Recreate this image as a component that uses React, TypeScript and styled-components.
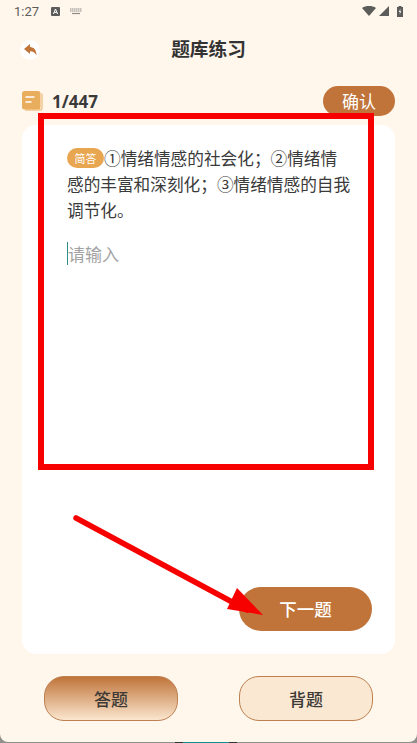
import React from "react";
import styled, { createGlobalStyle } from "styled-components";

const Global = createGlobalStyle`
  html, body { margin: 0; padding: 0; background: #8f8f8c; }
  * { box-sizing: border-box; }
`;

const font = `"Noto Sans CJK SC", "Noto Sans", sans-serif`;

const Screen = styled.div`
  position: relative;
  width: 417px;
  height: 743px;
  overflow: hidden;
  background: #8f8f8c;
  font-family: ${font};
`;

const Page = styled.div`
  width: 417px;
  height: 742px;
  background: #fff6ec;
  border-radius: 0 0 8px 8px;
  display: flex;
  flex-direction: column;
`;

const StatusBar = styled.div`
  height: 24px;
  padding: 0 14px 2px 14px;
  display: flex;
  align-items: center;
  gap: 10px;
  color: #5c5c5a;
`;

const Clock = styled.span`
  font-family: Roboto, sans-serif;
  font-size: 13px;
  width: 27px;
`;

const StatusRight = styled.div`
  margin-left: auto;
  display: flex;
  align-items: center;
  gap: 3px;
`;

const Header = styled.div`
  height: 54px;
  padding: 0 20px;
  display: flex;
  align-items: center;
  position: relative;
  justify-content: center;
`;

const BackButton = styled.div`
  position: absolute;
  left: 20px;
  top: 16px;
  width: 20px;
  height: 20px;
  border-radius: 50%;
  background: #fff;
  display: flex;
  align-items: center;
  justify-content: center;
`;

const Title = styled.h1`
  margin: 0 0 6px;
  font-size: 18.7px;
  line-height: 24px;
  font-weight: 700;
  color: #333;
`;

const ProgressRow = styled.div`
  height: 47px;
  padding: 8px 22px 0 22px;
  display: flex;
  align-items: flex-start;
`;

const SvgIcon = styled.svg`
  display: block;
  flex: none;
`;

const BookIcon = styled(SvgIcon)`
  margin-top: 5px;
`;

const BatteryIcon = styled(SvgIcon)`
  margin-left: 5px;
`;

const Count = styled.span`
  margin-left: 9px;
  margin-top: 6px;
  font-family: "Noto Sans", sans-serif;
  font-size: 17px;
  line-height: 20px;
  font-weight: 700;
  color: #3a3a3a;
`;

const Confirm = styled.div`
  margin-left: auto;
  width: 72px;
  height: 30px;
  border-radius: 15px;
  background: #c07439;
  color: #fff;
  font-size: 17px;
  line-height: 30px;
  text-align: center;
`;

const Card = styled.div`
  margin: 0 22px;
  height: 529px;
  background: #fff;
  border-radius: 14px;
  padding: 20px 23px 0 45px;
  display: flex;
  flex-direction: column;
  position: relative;
`;

const Question = styled.p`
  margin: 0;
  font-size: 16.67px;
  line-height: 26px;
  color: #3a3a3a;
  width: 285px;
  word-break: break-all;
`;

const Tag = styled.span`
  display: inline-block;
  width: 37px;
  height: 20px;
  border-radius: 10px;
  background: #e9a650;
  color: #fff;
  font-size: 11px;
  line-height: 20px;
  text-align: center;
  vertical-align: 2px;
`;

const Input = styled.div`
  margin-top: 19px;
  height: 23px;
  border-left: 1px solid #2e8f8a;
  font-size: 17px;
  line-height: 23px;
  color: #a3a3a3;
`;

const NextButton = styled.div`
  position: absolute;
  right: 23px;
  bottom: 23px;
  width: 133px;
  height: 44px;
  border-radius: 22px;
  background: #c07439;
  color: #fff;
  font-size: 17.500px;
  font-weight: 500;
  line-height: 44px;
  text-align: center;
`;

const Tabs = styled.div`
  margin-top: 22px;
  padding: 0 44px;
  display: flex;
  justify-content: space-between;
`;

const Tab = styled.div<{ $active?: boolean }>`
  width: 134px;
  height: 45px;
  border-radius: 20px;
  border: 1px solid #bd804f;
  background: ${(p) =>
    p.$active ? "linear-gradient(180deg, #c07439 0%, #fbe6cf 100%)" : "#fbe8d2"};
  color: #3d3a36;
  font-size: 17px;
  font-weight: 500;
  line-height: 43px;
  text-align: center;
`;

const Frame = styled.div`
  position: absolute;
  left: 38px;
  top: 113px;
  width: 336px;
  height: 357px;
  border: 6px solid #f60000;
`;

const Overlay = styled.svg`
  position: absolute;
  left: 0;
  top: 0;
  pointer-events: none;
`;

const HomeBar = styled.div`
  position: absolute;
  left: 175px;
  bottom: 0;
  width: 62px;
  height: 1px;
  background: linear-gradient(90deg, #333 0 13%, #0f8f8f 13% 87%, #333 87% 100%);
`;

export default function App() {
  return (
    <Screen>
      <Global />
      <Page>
        <StatusBar>
          <Clock>1:27</Clock>
          <SvgIcon width="9" height="9" viewBox="0 0 9 9">
            <rect width="9" height="9" rx="1" fill="#5c5c5a" />
            <path d="M2.400 7 4.500 2l2.100 5M3.200 5.400h2.600" stroke="#fff" strokeWidth="1" fill="none" />
          </SvgIcon>
          <SvgIcon width="12" height="7" viewBox="0 0 12 7">
            <path d="M0 1h12M0 3h12" stroke="#8b8b89" strokeWidth="1.200" strokeDasharray="1.500 .5" />
            <path d="M2 5.500h8" stroke="#8b8b89" strokeWidth="1.200" />
          </SvgIcon>
          <StatusRight>
            <SvgIcon width="14" height="10" viewBox="0 0 14 10">
              <path d="M0 2C4 -.6 10 -.6 14 2L7 10z" fill="#5c5c5a" />
            </SvgIcon>
            <SvgIcon width="10" height="10" viewBox="0 0 10 10">
              <path d="M10 0v10H0z" fill="#5c5c5a" />
            </SvgIcon>
            <BatteryIcon width="6" height="11" viewBox="0 0 6 11">
              <path d="M1.500 0h3v1H6v10H0V1h1.500z" fill="#5c5c5a" />
              <path d="M3.500 2.500 1.800 6h1.100L2.600 8.500 4.300 5.200H3.200z" fill="#fff" />
            </BatteryIcon>
          </StatusRight>
        </StatusBar>
        <Header>
          <BackButton>
            <SvgIcon width="13" height="12" viewBox="0 0 13 12">
              <path d="M0 5 6 0v3c4 .2 6.500 3 6.500 8.500C11 8.500 9 7.300 6 7.300V10z" fill="#c07439" />
            </SvgIcon>
          </BackButton>
          <Title>题库练习</Title>
        </Header>
        <ProgressRow>
          <BookIcon width="21" height="20" viewBox="0 0 21 20">
            <path d="M19.500 2.500h1v15a2 2 0 0 1-2 2H3v-1h15.500a1 1 0 0 0 1-1z" fill="#e9ad5e" />
            <rect x="0" y="0" width="18.500" height="18.500" rx="2.500" fill="#e9ad5e" />
            <path d="M3.500 6h9M3.500 11h6" stroke="#fff" strokeWidth="1.400" />
          </BookIcon>
          <Count>1/447</Count>
          <Confirm>确认</Confirm>
        </ProgressRow>
        <Card>
          <Question>
            <Tag>简答</Tag>①情绪情感的社会化；②情绪情感的丰富和深刻化；③情绪情感的自我调节化。
          </Question>
          <Input>请输入</Input>
          <NextButton>下一题</NextButton>
        </Card>
        <Tabs>
          <Tab $active>答题</Tab>
          <Tab>背题</Tab>
        </Tabs>
      </Page>
      <HomeBar />
      <Frame />
      <Overlay width="417" height="743" viewBox="0 0 417 743">
        <path d="M76 518 247 610" stroke="#f60000" strokeWidth="5.500" strokeLinecap="round" />
        <path d="M263 615 227 609 237 588z" fill="#f60000" />
      </Overlay>
    </Screen>
  );
}
